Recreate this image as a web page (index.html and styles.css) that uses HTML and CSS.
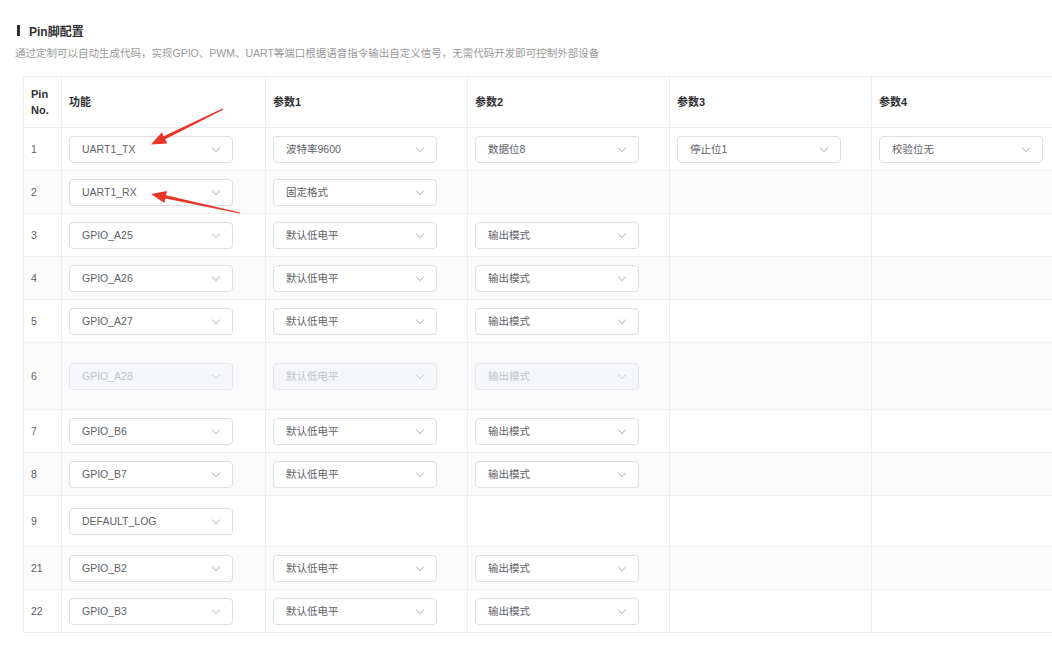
FILE: index.html
```html
<!DOCTYPE html>
<html>
<head>
    <title>Pin脚配置</title>
    <link rel="stylesheet" href="styles.css">
</head>
<body>
    <div class="page">
        <div class="title"><span class="bar"></span>Pin脚配置</div>
        <div class="desc">通过定制可以自动生成代码，实现GPIO、PWM、UART等端口根据语音指令输出自定义信号，无需代码开发即可控制外部设备</div>

        <table class="pin-table">
            <colgroup>
                <col class="c-pin"><col class="c-fn"><col class="c-p"><col class="c-p"><col class="c-p"><col class="c-p">
            </colgroup>
            <tr class="head">
                <th>Pin No.</th>
                <th>功能</th>
                <th>参数1</th>
                <th>参数2</th>
                <th>参数3</th>
                <th>参数4</th>
            </tr>
            <tr>
                <td>1</td>
                <td><div class="select">UART1_TX<i class="arrow"></i></div></td>
                <td><div class="select">波特率9600<i class="arrow"></i></div></td>
                <td><div class="select">数据位8<i class="arrow"></i></div></td>
                <td><div class="select">停止位1<i class="arrow"></i></div></td>
                <td><div class="select">校验位无<i class="arrow"></i></div></td>
            </tr>
            <tr class="stripe">
                <td>2</td>
                <td><div class="select">UART1_RX<i class="arrow"></i></div></td>
                <td><div class="select">固定格式<i class="arrow"></i></div></td>
                <td></td><td></td><td></td>
            </tr>
            <tr>
                <td>3</td>
                <td><div class="select">GPIO_A25<i class="arrow"></i></div></td>
                <td><div class="select">默认低电平<i class="arrow"></i></div></td>
                <td><div class="select">输出模式<i class="arrow"></i></div></td>
                <td></td><td></td>
            </tr>
            <tr class="stripe">
                <td>4</td>
                <td><div class="select">GPIO_A26<i class="arrow"></i></div></td>
                <td><div class="select">默认低电平<i class="arrow"></i></div></td>
                <td><div class="select">输出模式<i class="arrow"></i></div></td>
                <td></td><td></td>
            </tr>
            <tr>
                <td>5</td>
                <td><div class="select">GPIO_A27<i class="arrow"></i></div></td>
                <td><div class="select">默认低电平<i class="arrow"></i></div></td>
                <td><div class="select">输出模式<i class="arrow"></i></div></td>
                <td></td><td></td>
            </tr>
            <tr class="stripe tall">
                <td>6</td>
                <td><div class="select disabled">GPIO_A28<i class="arrow"></i></div></td>
                <td><div class="select disabled">默认低电平<i class="arrow"></i></div></td>
                <td><div class="select disabled">输出模式<i class="arrow"></i></div></td>
                <td></td><td></td>
            </tr>
            <tr>
                <td>7</td>
                <td><div class="select">GPIO_B6<i class="arrow"></i></div></td>
                <td><div class="select">默认低电平<i class="arrow"></i></div></td>
                <td><div class="select">输出模式<i class="arrow"></i></div></td>
                <td></td><td></td>
            </tr>
            <tr class="stripe">
                <td>8</td>
                <td><div class="select">GPIO_B7<i class="arrow"></i></div></td>
                <td><div class="select">默认低电平<i class="arrow"></i></div></td>
                <td><div class="select">输出模式<i class="arrow"></i></div></td>
                <td></td><td></td>
            </tr>
            <tr class="mid">
                <td>9</td>
                <td><div class="select">DEFAULT_LOG<i class="arrow"></i></div></td>
                <td></td><td></td><td></td><td></td>
            </tr>
            <tr class="stripe">
                <td>21</td>
                <td><div class="select">GPIO_B2<i class="arrow"></i></div></td>
                <td><div class="select">默认低电平<i class="arrow"></i></div></td>
                <td><div class="select">输出模式<i class="arrow"></i></div></td>
                <td></td><td></td>
            </tr>
            <tr>
                <td>22</td>
                <td><div class="select">GPIO_B3<i class="arrow"></i></div></td>
                <td><div class="select">默认低电平<i class="arrow"></i></div></td>
                <td><div class="select">输出模式<i class="arrow"></i></div></td>
                <td></td><td></td>
            </tr>
        </table>
    </div>

    <!-- annotation arrows drawn over the table -->
    <svg class="marks" width="1052" height="652" viewBox="0 0 1052 652">
        <polygon fill="#e8352a" points="223.5,109.6 165.2,139.3 167.2,143.6 151,144.5 161.9,132.2 163.6,136.3 222.5,108.4"/>
        <polygon fill="#e8352a" points="240.2,212.4 166,195.3 167,190.9 151,194 164.4,203 165.4,198.6 239.8,213.6"/>
    </svg>
</body>
</html>
```

FILE: styles.css
```css
body {
    margin: 0;
    background: #fff;
    font-family: "Liberation Sans", "Noto Sans CJK SC", sans-serif;
    color: #606266;
    overflow: hidden;
    position: relative;
}
.page { padding: 22px 0 0 15px; }

.title {
    display: flex;
    align-items: center;
    gap: 9px;
    margin-left: 2px;
    height: 16px;
    font-size: 12px;
    font-weight: bold;
    color: #303133;
}
.bar { width: 3px; height: 11px; background: #303133; }
.desc {
    margin-top: 7px;
    font-size: 10.5px;
    line-height: 16px;
    color: #999;
}

.pin-table {
    margin: 15px 0 0 8px;
    width: 1050px;
    table-layout: fixed;
    border-collapse: collapse;
    font-size: 10.5px;
}
.c-pin { width: 38px; }
.c-fn { width: 204px; }
.c-p { width: 202px; }
th, td {
    border: 1px solid #ebeef5;
    padding: 0 7px;
    text-align: left;
    vertical-align: middle;
}
th {
    font-size: 11px;
    font-weight: bold;
    color: #303133;
    line-height: 16px;
}
.head { height: 51px; }
tr { height: 43px; }
tr.tall { height: 67px; }
tr.mid { height: 51px; }
.stripe td { background: #fafafa; }

.select {
    position: relative;
    box-sizing: border-box;
    width: 164px;
    height: 27px;
    line-height: 25px;
    padding-left: 12px;
    border: 1px solid #dcdfe6;
    border-radius: 4px;
    background: #fff;
    color: #606266;
}
.select .arrow {
    position: absolute;
    right: 13px;
    top: 8px;
    width: 5px;
    height: 5px;
    border-right: 1px solid #c0c4cc;
    border-bottom: 1px solid #c0c4cc;
    transform: rotate(45deg);
}
.select.disabled {
    background: #f5f7fa;
    border-color: #e4e7ed;
    color: #c0c4cc;
}
.select.disabled .arrow { border-color: #d4d7de; }

.marks {
    position: absolute;
    left: 0;
    top: 0;
    pointer-events: none;
}
```
